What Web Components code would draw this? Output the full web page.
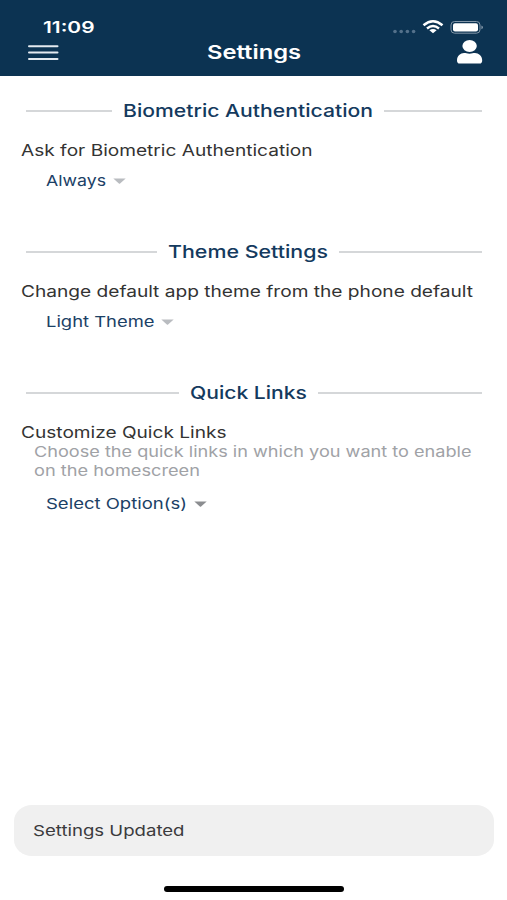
<!DOCTYPE html>
<html lang="en">
<head>
<meta charset="utf-8">
<title>Settings</title>
<style>
html,body{margin:0;height:100%;background:#fff}
body{font-family:Inter,"Liberation Sans",sans-serif}
</style>
</head>
<body>
<settings-app></settings-app>
<script>
const define = (name, html, setup) => {
  const t = document.createElement('template');
  t.innerHTML = html;
  customElements.define(name, class extends HTMLElement {
    constructor() {
      super();
      this.attachShadow({mode: 'open'}).append(t.content.cloneNode(true));
    }
    connectedCallback() { if (setup) setup(this, this.shadowRoot); }
  });
};

/* A line of text in an expanded face: glyphs are widened to fill the given width. */
define('wide-text', `<style>
:host{display:block;flex:none;white-space:nowrap}
span{display:inline-block;transform-origin:0 50%}
</style><span></span>`, (el, root) => {
  const span = root.querySelector('span');
  const w = +el.getAttribute('width');
  span.textContent = el.getAttribute('text');
  el.style.width = w + 'px';
  span.style.transform = `scaleX(${w / span.getBoundingClientRect().width})`;
});

define('status-bar', `<style>
:host{display:flex;align-items:center;height:22px;padding:16px 24px 0 42.5px;color:#fff;font:600 16px/22px Inter,sans-serif}
.icons{margin-left:auto;display:block}
</style>
<wide-text text="11:09" width="51.500"></wide-text>
<svg class="icons" width="91" height="18" viewBox="392 18 91 18">
<g fill="#54718b"><circle cx="395" cy="31.5" r="1.8"/><circle cx="401.2" cy="31.5" r="1.8"/><circle cx="407.4" cy="31.5" r="1.8"/><circle cx="413.6" cy="31.5" r="1.8"/></g>
<g fill="none" stroke="#fff" stroke-width="2.5"><path d="M423.5 25.2Q433 17.3 442.5 25.2"/><path d="M427 28.4Q433 23.7 439 28.4"/></g>
<path d="M429.4 30.3Q433 27.8 436.600 30.3L433 33.200Z" fill="#fff"/>
<rect x="451" y="21.5" width="29" height="11.700" rx="3.500" fill="none" stroke="#8296a8"/>
<rect x="453" y="23.200" width="25" height="8.400" rx="2" fill="#fff"/>
<path d="M481.400 25.500Q483 26 483 27.300T481.400 29.200Z" fill="#8296a8"/>
</svg>`);

define('nav-bar', `<style>
:host{display:grid;grid-template-columns:1fr auto 1fr;align-items:center;height:26px;padding:1px 24px 0 28px;color:#fff;font:600 19px/26px Inter,sans-serif}
svg{display:block}.user{justify-self:end}
wide-text{margin:1px 3px 0 0}
</style>
<svg width="31" height="26" viewBox="28 40 31 26" stroke="#e4eaf0" stroke-width="2" stroke-linecap="round"><path d="M29 46.300H57.500M29 52.600H57.500M29 58.900H57.500"/></svg>
<wide-text text="Settings" width="94"></wide-text>
<svg class="user" width="27" height="26" viewBox="456.500 40 27 26" fill="#fff"><ellipse cx="470.100" cy="46" rx="7.200" ry="5.900"/><path d="M457.500 60.500C457.500 55.800 461 53 464.500 53C466.500 53 467.500 53.700 470 53.700S473.500 53 475.500 53C479 53 482.700 55.800 482.700 60.500Q482.700 63.600 480 63.600H460.200Q457.500 63.600 457.500 60.500Z"/></svg>`);

define('app-header', `<style>
:host{display:block;box-sizing:border-box;height:75.5px;background:#0c3352}
</style><status-bar></status-bar><nav-bar></nav-bar>`);

define('section-title', `<style>
:host{display:flex;align-items:center;gap:11px;height:24px;padding:0 5px;color:#143a5e;font:550 17.5px/24px Inter,sans-serif}
i{height:2px;background:#d5d7d9}
.a{flex:1 1 0}.b{flex:1 1 12px}
</style><i class="a"></i><wide-text></wide-text><i class="b"></i>`, (el, root) => {
  const t = root.querySelector('wide-text');
  t.setAttribute('text', el.getAttribute('text'));
  t.setAttribute('width', el.getAttribute('width'));
  t.parentNode.replaceChild(t.cloneNode(), t);
});

define('drop-down', `<style>
:host{display:flex;align-items:center;gap:6.500px;height:20px;padding-left:25px;color:#1b4166;font:400 15px/20px Inter,sans-serif}
svg{display:block;fill:var(--arrow,#b9bcc0)}
</style><slot></slot><svg width="13" height="6" viewBox="0 0 13 6"><path d="M.3 .4H12.700L7.100 5.500Q6.500 5.900 5.900 5.500Z"/></svg>`);

define('settings-section', `<style>
:host{display:block;height:141px}
.label{padding-top:17px;color:#333}
.hint{padding-left:13px;color:#a0a2a6}
.value{padding-top:var(--value-gap,10.5px)}
</style>
<slot name="title"></slot>
<div class="label"><slot name="label"></slot></div>
<div class="hint"><slot name="hint"></slot></div>
<div class="value"><slot name="value"></slot></div>`);

define('toast-message', `<style>
:host{display:flex;align-items:center;box-sizing:border-box;height:51px;margin:0 13.500px;padding-left:19.500px;border-radius:18px / 16px;background:#f0f0f0;color:#3b3b3d;font:400 15px/20px Inter,sans-serif}
</style><slot></slot>`);

define('home-indicator', `<style>
:host{display:block;width:180.500px;height:5.500px;border-radius:3px;background:#000}
</style>`);

define('settings-app', `<style>
:host{display:flex;flex-direction:column;height:900px;width:507px;overflow:hidden;background:#fff}
main{flex:1;padding:23.500px 20px 0 21px}
toast-message{margin-bottom:30px}
home-indicator{margin:0 0 8.500px 163.500px}
.dark{--arrow:#8b8d90;--value-gap:13.500px}
[slot=label]{font:400 16px/20px Inter,sans-serif;margin-left:-.5px}
[slot=hint]{font:400 15px/19px Inter,sans-serif}
</style>
<app-header></app-header>
<main>
<settings-section>
<section-title slot="title" text="Biometric Authentication" width="250"></section-title>
<wide-text slot="label" text="Ask for Biometric Authentication" width="291.500"></wide-text>
<drop-down slot="value"><wide-text text="Always" width="60"></wide-text></drop-down>
</settings-section>
<settings-section>
<section-title slot="title" text="Theme Settings" width="160"></section-title>
<wide-text slot="label" text="Change default app theme from the phone default" width="452"></wide-text>
<drop-down slot="value"><wide-text text="Light Theme" width="108.500"></wide-text></drop-down>
</settings-section>
<settings-section class="dark">
<section-title slot="title" text="Quick Links" width="117"></section-title>
<wide-text slot="label" text="Customize Quick Links" width="205.500"></wide-text>
<wide-text slot="hint" text="Choose the quick links in which you want to enable" width="437.500"></wide-text>
<wide-text slot="hint" text="on the homescreen" width="166"></wide-text>
<drop-down slot="value"><wide-text text="Select Option(s)" width="141"></wide-text></drop-down>
</settings-section>
</main>
<toast-message><wide-text text="Settings Updated" width="151.500"></wide-text></toast-message>
<home-indicator></home-indicator>`);
</script>
</body>
</html>
